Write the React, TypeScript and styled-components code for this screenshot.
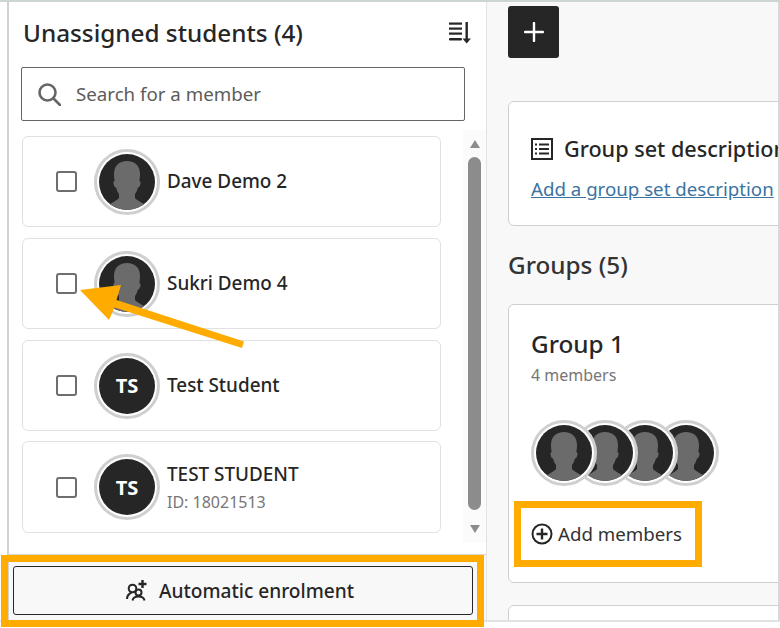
import styled, { createGlobalStyle } from "styled-components";

const GlobalStyle = createGlobalStyle`
  * {
    box-sizing: border-box;
  }
  html, body {
    margin: 0;
    padding: 0;
    background: #fff;
    font-family: "Noto Sans", "Open Sans", sans-serif;
    color: #262626;
  }
`;

const Frame = styled.div`
  position: relative;
  width: 780px;
  height: 628px;
  overflow: hidden;
`;

const Shell = styled.div`
  display: flex;
  width: 780px;
  height: 622px;
  padding-left: 7px;
  border-top: 2px solid #cdd5d4;
  border-bottom: 2px solid #dfe3e2;
`;

const Sidebar = styled.aside`
  width: 480px;
  display: flex;
  flex-direction: column;
  background: #fff;
  border-left: 2px solid #cdd5d4;
  border-right: 1px solid #e3e3e3;
`;

const SidebarHead = styled.div`
  display: flex;
  justify-content: space-between;
  align-items: center;
  height: 61px;
  padding: 0 14px 0 14px;
`;

const Title = styled.h2`
  margin: 0;
  font-size: 24.3px;
  font-weight: 500;
  line-height: 32px;
  color: #262626;
`;

const SearchBox = styled.div`
  display: flex;
  align-items: center;
  gap: 15px;
  width: 444px;
  height: 54px;
  margin: 4px 0 9px 12px;
  padding: 0 0 1px 15px;
  border: 1px solid #666;
  border-radius: 2px;
  font-size: 18.7px;
  color: #5c5c5c;
`;

const ListArea = styled.div`
  flex: 1;
  display: flex;
  min-height: 0;
  padding-left: 13px;
`;

const CardList = styled.div`
  width: 420px;
  display: flex;
  flex-direction: column;
  gap: 11px;
  padding-top: 6px;
`;

const StudentCard = styled.div<{ $tall?: boolean }>`
  display: flex;
  align-items: center;
  height: ${(p) => (p.$tall ? "92px" : "91px")};
  margin-top: ${(p) => (p.$tall ? "-1px" : "0")};
  padding-left: 33px;
  border: 1px solid #e0e2e2;
  border-radius: 6px;
  background: #fff;
`;

const Checkbox = styled.span`
  flex: none;
  width: 21px;
  height: 21px;
  margin-right: 17px;
  border: 2px solid #6e6e6e;
  border-radius: 3px;
  background: #fff;
`;

const Ring = styled.span<{ $stacked?: boolean; $z?: number }>`
  position: relative;
  z-index: ${(p) => p.$z ?? 0};
  flex: none;
  width: 66px;
  height: 66px;
  padding: 2px;
  border-radius: 50%;
  background: #fff;
  border: 3px solid #cfcfcf;
  margin-right: ${(p) => (p.$stacked ? "-25.5px" : "7px")};
`;

const Disc = styled.span`
  display: flex;
  align-items: center;
  justify-content: center;
  width: 100%;
  height: 100%;
  overflow: hidden;
  border-radius: 50%;
  background: #262626;
  color: #fff;
  font-size: 20px;
  font-weight: 700;
`;

const NameBlock = styled.div<{ $tall?: boolean }>`
  display: flex;
  flex-direction: column;
  margin-top: ${(p) => (p.$tall ? "2px" : "-2px")};
`;

const Name = styled.span`
  font-size: 18.9px;
  font-weight: 500;
  line-height: 28px;
  color: #262626;
`;

const SubId = styled.span`
  font-size: 16px;
  line-height: 28px;
  color: #767676;
`;

const Scrollbar = styled.div`
  width: 23px;
  height: 413px;
  margin-left: 22px;
  display: flex;
  flex-direction: column;
  align-items: center;
  background: #fbfbfb;
`;

const ScrollArrow = styled.span<{ $down?: boolean }>`
  width: 0;
  height: 0;
  margin: ${(p) => (p.$down ? "15px 0 0" : "10px 0 9px")};
  border-left: 5.5px solid transparent;
  border-right: 5.5px solid transparent;
  ${(p) => (p.$down ? "border-top: 8px solid #8c8c8c;" : "border-bottom: 8px solid #8c8c8c;")}
`;

const ScrollThumb = styled.span`
  width: 13px;
  height: 353px;
  border-radius: 7px;
  background: #8c8c8c;
`;

const SidebarFoot = styled.div`
  height: 66px;
  padding: 11px 3px 0 4px;
  background: #f8f8f8;
  border-top: 1px solid #d8d8d8;
`;

const AutoButton = styled.button`
  display: flex;
  align-items: center;
  justify-content: center;
  gap: 11px;
  width: 460px;
  height: 49px;
  padding: 0 6px 0 0;
  border: 1px solid #262626;
  border-radius: 3px;
  background: #f8f8f8;
  font-family: inherit;
  font-size: 19.1px;
  font-weight: 500;
  color: #262626;
`;

const Main = styled.main`
  flex: 1;
  min-width: 0;
  padding: 4px 0 0 21px;
  overflow: hidden;
  background: #f8f8f8;
  border-right: 2px solid #d5d9d8;
`;

const PlusButton = styled.button`
  display: flex;
  align-items: center;
  justify-content: center;
  width: 51px;
  height: 52px;
  padding: 0;
  border: 0;
  border-radius: 3px;
  background: #262626;
`;

const Panel = styled.section<{ $height: number; $top: number }>`
  width: 300px;
  height: ${(p) => p.$height}px;
  margin-top: ${(p) => p.$top}px;
  padding-left: 22px;
  background: #fff;
  border: 1px solid #cfcfcf;
  border-radius: 6px;
  overflow: hidden;
`;

const DescHead = styled.div`
  display: flex;
  align-items: center;
  gap: 11px;
  margin-top: 31px;
  font-size: 21.6px;
  font-weight: 500;
  line-height: 32px;
  white-space: nowrap;
`;

const DescLink = styled.a`
  display: block;
  margin-top: 11px;
  font-size: 18.7px;
  line-height: 26px;
  color: #3b73a1;
  text-decoration: underline;
  white-space: nowrap;
`;

const SectionTitle = styled.h2`
  margin: 23px 0 0;
  font-size: 24.3px;
  font-weight: 500;
  line-height: 32px;
  color: #333;
`;

const GroupTitle = styled.h3`
  margin: 23px 0 0;
  font-size: 24.3px;
  font-weight: 500;
  line-height: 32px;
`;

const MemberCount = styled.div`
  margin-top: 3px;
  font-size: 16px;
  line-height: 24px;
  color: #767676;
`;

const AvatarStack = styled.div`
  display: flex;
  margin-top: 33px;
`;

const AddMembers = styled.div`
  display: flex;
  align-items: center;
  gap: 5px;
  margin-top: 34px;
  font-size: 18.7px;
  line-height: 28px;
  color: #333;
`;

const Highlight = styled.div<{ $x: number; $y: number; $w: number; $h: number }>`
  position: absolute;
  left: ${(p) => p.$x}px;
  top: ${(p) => p.$y}px;
  width: ${(p) => p.$w}px;
  height: ${(p) => p.$h}px;
  border: 7px solid #ffab00;
  pointer-events: none;
`;

const ArrowLayer = styled.svg`
  position: absolute;
  left: 0;
  top: 0;
  pointer-events: none;
`;

function Silhouette() {
  return (
    <svg width="56" height="56" viewBox="0 0 56 56">
      <path
        fill="#6b6b6b"
        d="M28 7c-8 0-13 5-13 13 0 3 .3 5 .7 7-1.200 0-1.500 1.500-1 3.500.5 2 1.300 3 2.300 3 .8 2.500 1.700 5 3 6.500v4c-2 3-9 5-13 9 3 2 12 4 21 4s18-2 21-4c-4-4-11-6-13-9v-4c1.300-1.500 2.200-4 3-6.500 1 0 1.800-1 2.300-3 .5-2 .2-3.500-1-3.500.4-2 .7-4 .7-7 0-8-5-13-13-13z"
      />
    </svg>
  );
}

function Avatar({ initials, stacked, z }: { initials?: string; stacked?: boolean; z?: number }) {
  return (
    <Ring $stacked={stacked} $z={z}>
      <Disc>{initials ? initials : <Silhouette />}</Disc>
    </Ring>
  );
}

function SortIcon() {
  return (
    <svg width="24" height="24" viewBox="0 0 24 24" fill="#262626">
      <rect x="1" y="1.500" width="13" height="2.200" />
      <rect x="1" y="6.500" width="13" height="2.200" />
      <rect x="1" y="11.500" width="13" height="2.200" />
      <rect x="1" y="17" width="13" height="2.600" rx="1" />
      <rect x="17.500" y="1" width="2.400" height="19" />
      <path d="M14.500 17.500h8.400l-4.200 5z" />
    </svg>
  );
}

function SearchIcon() {
  return (
    <svg width="24" height="24" viewBox="0 0 24 24" fill="none" stroke="#666" strokeWidth="2.600">
      <circle cx="10.500" cy="10.500" r="8" />
      <path d="M16.500 16.500 23 23" strokeLinecap="round" />
    </svg>
  );
}

function GroupAddIcon() {
  return (
    <svg width="22" height="22" viewBox="0 0 22 22" fill="none" stroke="#262626" strokeWidth="2">
      <circle cx="6.500" cy="8.500" r="3.800" />
      <circle cx="12.500" cy="12.500" r="3" />
      <path d="M1 19c0-3 1.500-5 4.500-6.500M6.500 20.500c.5-3 3-4 6-4s5.500 1 6 4" />
      <path d="M16.500 0v8M12.500 4h8" strokeWidth="2.400" />
    </svg>
  );
}

function ListIcon() {
  return (
    <svg width="22" height="22" viewBox="0 0 22 22" fill="none">
      <rect x="1" y="1" width="20" height="20" stroke="#262626" strokeWidth="2" />
      <path d="M8 6.500h10M8 11h10M8 15.500h10M4 6.500h2M4 11h2M4 15.500h2" stroke="#262626" strokeWidth="2.200" />
    </svg>
  );
}

function PlusIcon() {
  return (
    <svg width="20" height="20" viewBox="0 0 20 20" stroke="#fff" strokeWidth="2.400" strokeLinecap="round">
      <path d="M10 1v18M1 10h18" />
    </svg>
  );
}

function CirclePlusIcon() {
  return (
    <svg width="22" height="22" viewBox="0 0 22 22" fill="none" stroke="#262626">
      <circle cx="11" cy="11" r="9.500" strokeWidth="2" />
      <path d="M11 5.500v11M5.500 11h11" strokeWidth="2.400" />
    </svg>
  );
}

const students = [
  { name: "Dave Demo 2" },
  { name: "Sukri Demo 4" },
  { name: "Test Student", initials: "TS" },
  { name: "TEST STUDENT", initials: "TS", id: "ID: 18021513" },
];

export default function App() {
  return (
    <Frame>
      <GlobalStyle />
      <Shell>
        <Sidebar>
          <SidebarHead>
            <Title>Unassigned students (4)</Title>
            <SortIcon />
          </SidebarHead>
          <SearchBox>
            <SearchIcon />
            Search for a member
          </SearchBox>
          <ListArea>
            <CardList>
              {students.map((s) => (
                <StudentCard key={s.name} $tall={!!s.id}>
                  <Checkbox />
                  <Avatar initials={s.initials} />
                  <NameBlock $tall={!!s.id}>
                    <Name>{s.name}</Name>
                    {s.id && <SubId>{s.id}</SubId>}
                  </NameBlock>
                </StudentCard>
              ))}
            </CardList>
            <Scrollbar>
              <ScrollArrow />
              <ScrollThumb />
              <ScrollArrow $down />
            </Scrollbar>
          </ListArea>
          <SidebarFoot>
            <AutoButton>
              <GroupAddIcon />
              Automatic enrolment
            </AutoButton>
          </SidebarFoot>
        </Sidebar>
        <Main>
          <PlusButton>
            <PlusIcon />
          </PlusButton>
          <Panel $height={125} $top={43}>
            <DescHead>
              <ListIcon />
              Group set description
            </DescHead>
            <DescLink>Add a group set description</DescLink>
          </Panel>
          <SectionTitle>Groups (5)</SectionTitle>
          <Panel $height={279} $top={23}>
            <GroupTitle>Group 1</GroupTitle>
            <MemberCount>4 members</MemberCount>
            <AvatarStack>
              {[4, 3, 2, 1].map((z) => (
                <Avatar key={z} stacked z={z} />
              ))}
            </AvatarStack>
            <AddMembers>
              <CirclePlusIcon />
              Add members
            </AddMembers>
          </Panel>
          <Panel $height={60} $top={22} />
        </Main>
      </Shell>
      <Highlight $x={1} $y={555} $w={483} $h={72} />
      <Highlight $x={514} $y={501} $w={188} $h={66} />
      <ArrowLayer width="780" height="628" viewBox="0 0 780 628">
        <path
          fill="#ffab00"
          d="M80 290 121 285 116.500 300 244 341.500 242 348 114.500 307.500 109 320z"
        />
      </ArrowLayer>
    </Frame>
  );
}
